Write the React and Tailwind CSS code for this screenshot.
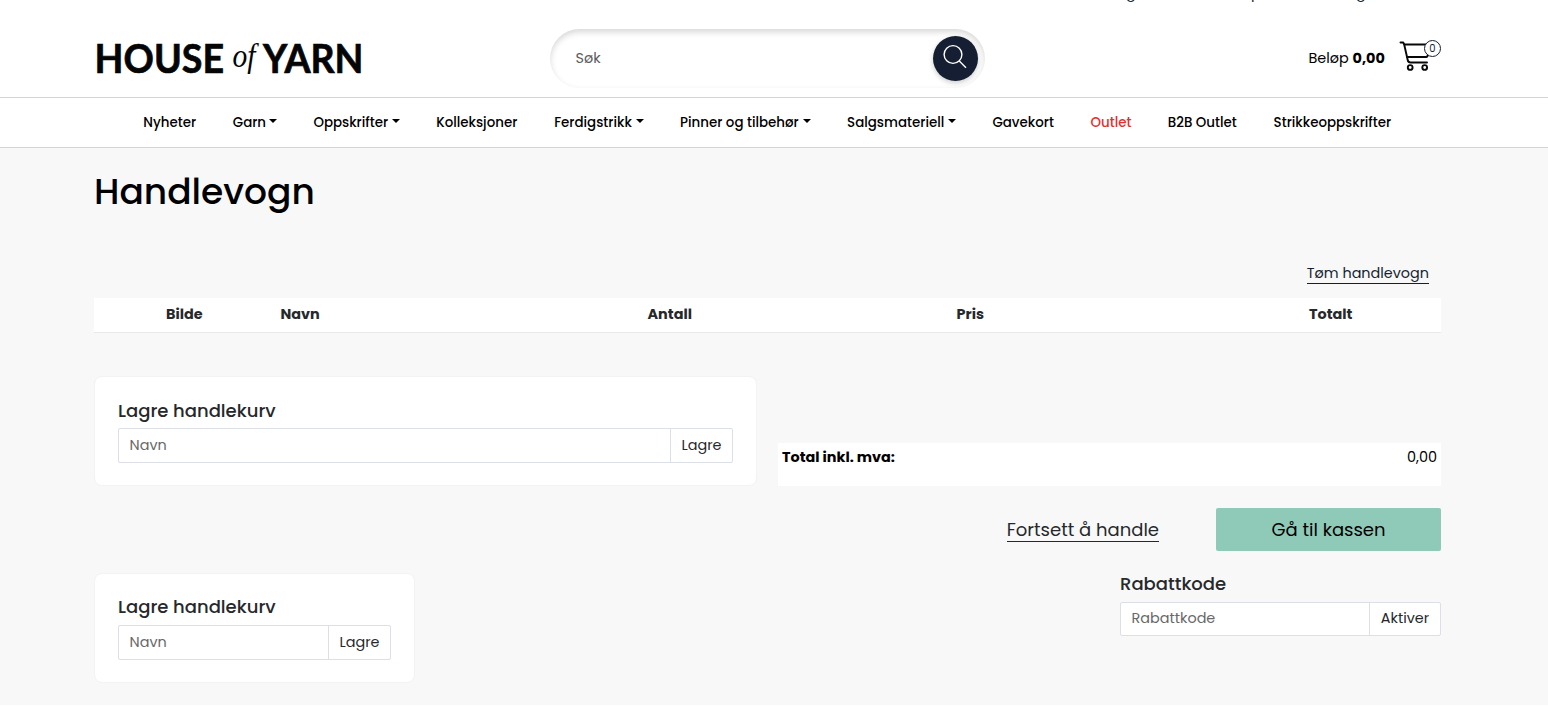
import React from "react";

const navItems = [
  { label: "Nyheter", box: "w-[53.5px]" },
  { label: "Garn", box: "w-[44.6px]", menu: true },
  { label: "Oppskrifter", box: "w-[86.8px]", menu: true },
  { label: "Kolleksjoner", box: "w-[82px]" },
  { label: "Ferdigstrikk", box: "w-[89.9px]", menu: true },
  { label: "Pinner og tilbehør", box: "w-[131px]", menu: true },
  { label: "Salgsmateriell", box: "w-[109.3px]", menu: true },
  { label: "Gavekort", box: "w-[62.1px]" },
  { label: "Outlet", box: "w-[41.3px]", color: "text-[#e62e2d]" },
  { label: "B2B Outlet", box: "w-[69.8px]" },
  { label: "Strikkeoppskrifter", box: "w-[119px]" },
];

function Logo() {
  return (
    <svg className="mt-[38px] h-10 w-[270px] shrink-0" viewBox="0 0 270 40" fill="#050505">
      <text x="0.6" y="35" fontFamily="Lato" fontWeight="700" fontSize="40.5" textLength="129.5" lengthAdjust="spacingAndGlyphs" stroke="#050505" strokeWidth="0.7">HOUSE</text>
      <text x="138.5" y="28.5" fontFamily="Liberation Serif" fontStyle="italic" fontSize="33" textLength="23" lengthAdjust="spacingAndGlyphs">of</text>
      <text x="169" y="35" fontFamily="Lato" fontWeight="700" fontSize="40.5" textLength="100.5" lengthAdjust="spacingAndGlyphs" stroke="#050505" strokeWidth="0.7">YARN</text>
    </svg>
  );
}

function Search() {
  return (
    <div className="mt-[29px] flex h-[59px] w-[435px] items-center justify-between rounded-full bg-white pr-[7px] pl-[25.5px] shadow-[inset_0_3px_6px_rgba(0,0,0,0.16)]">
      <span className="pb-px text-[14.4px] leading-5 text-[#5c5c5c]">Søk</span>
      <button className="size-[45px] rounded-full bg-[#151e32] shadow-[0_2px_5px_rgba(0,0,0,0.2)]">
        <svg viewBox="0 0 45 45" className="size-[45px]" fill="none" stroke="white" strokeWidth="1.4">
          <circle cx="20" cy="18.5" r="8.9" />
          <path d="M26.3 25L33 31.7" />
        </svg>
      </button>
    </div>
  );
}

function Cart() {
  return (
    <div className="relative mt-[40px] h-8 w-[42px]">
      <svg viewBox="0 0 42 32" className="h-8 w-[42px]" fill="none" stroke="#080808" strokeWidth="1.9" strokeLinecap="round" strokeLinejoin="round">
        <path d="M1.5 2.5H4.2L5.2 4.5L8.7 20Q9.2 22.5 11.5 22.5H28" />
        <path d="M5.5 4.5H28M8.2 17H27.2Q28.5 17 29 14.5" />
        <circle cx="11.2" cy="27.5" r="2.4" />
        <circle cx="25.7" cy="27.5" r="2.4" />
      </svg>
      <span className="absolute top-0 right-0 flex size-[17px] items-center justify-center rounded-full border border-[#151e32] bg-white pt-px text-[10px] leading-none text-[#151e32]">0</span>
    </div>
  );
}

function InputGroup({ placeholder, action, actionWidth, height = "h-[35px]" }) {
  return (
    <div className={`flex rounded-[2px] border border-[#dcdfe6] bg-white text-[14.4px] ${height}`}>
      <span className="flex flex-1 items-center pl-[10.6px] text-[#686868]">{placeholder}</span>
      <button className={`border-l border-[#dcdfe6] text-center text-[#26282b] ${actionWidth}`}>{action}</button>
    </div>
  );
}

function SaveCard({ size, pad }) {
  return (
    <section className={`rounded-lg border border-[#f3f3f3] bg-white px-[23px] ${size} ${pad}`}>
      <h2 className="text-[18px] leading-6 font-medium text-[#26282b]">Lagre handlekurv</h2>
      <InputGroup placeholder="Navn" action="Lagre" actionWidth="w-[62px]" />
    </section>
  );
}

export default function App() {
  return (
    <div className="h-[716px] overflow-hidden bg-white font-[Poppins,Inter,sans-serif] text-black">
      <header className="h-[98px] border-b border-[#d4d4d4]">
        <div className="relative flex h-full pl-[94px]">
          <div className="absolute top-0 left-[1126px] flex h-[2px] items-end overflow-hidden text-[14.4px] leading-[17px] text-[#151e32]">
            <span className="w-[125px]">g</span>
            <span className="w-[105px]">p</span>
            <span>g</span>
          </div>
          <Logo />
          <div className="w-[186px]" />
          <Search />
          <div className="mt-[47px] ml-[323.5px] w-[90.5px] text-[14.4px] leading-[22px] whitespace-nowrap">
            Beløp <b>0,00</b>
          </div>
          <Cart />
        </div>
      </header>
      <nav className="flex h-[50px] items-center gap-9 border-b border-[#d4d4d4] pt-px pl-[143.3px] text-[13.4px] leading-5 font-medium">
        {navItems.map((item) => (
          <a key={item.label} className={`flex shrink-0 items-center justify-between whitespace-nowrap ${item.box} ${item.color || ""}`}>
            {item.label}
            {item.menu && <i className="-mt-[5px] border-x-4 border-t-4 border-x-transparent border-t-black" />}
          </a>
        ))}
      </nav>
      <main className="h-[557px] bg-[#f8f8f8] pr-[107px] pl-[94px]">
        <h1 className="pt-5 text-[36px] leading-[48px] font-medium">Handlevogn</h1>
        <div className="mt-[46px] flex justify-end pr-3">
          <a className="h-[22px] border-b border-[#151e32] text-[14.4px] leading-[23px] text-[#151e32]">Tøm handlevogn</a>
        </div>
        <div className="mt-[14px] flex h-[35px] items-center border-b border-[#e9e9e9] bg-white pb-[2px] pl-[72px] text-[14.4px] leading-5 font-bold text-[#26282b]">
          <span className="w-[114.5px]">Bilde</span>
          <span className="w-[367px]">Navn</span>
          <span className="w-[309px]">Antall</span>
          <span className="w-[352.5px]">Pris</span>
          <span>Totalt</span>
        </div>
        <div className="mt-[43px] flex justify-between">
          <SaveCard size="h-[110px] w-[663px]" pad="pt-[22px] [&>h2]:mb-[5px]" />
          <div className="mt-[67px] flex h-[43px] w-[663px] justify-between bg-white px-1 pt-1 text-[14.4px] leading-5">
            <b>Total inkl. mva:</b>
            <span>0,00</span>
          </div>
        </div>
        <div className="mt-[22px] flex h-[43px] items-center justify-end gap-[57px] text-lg">
          <a className="h-[25px] border-b border-[#26282b] leading-[26px] text-[#26282b]">Fortsett å handle</a>
          <button className="h-[43px] w-[225px] rounded-[2px] bg-[#8fc9b7]">Gå til kassen</button>
        </div>
        <div className="mt-[22px] flex justify-between">
          <SaveCard size="h-[110px] w-[321px]" pad="pt-[21px] [&>h2]:mb-[6px]" />
          <section className="-mt-px w-[321px]">
            <h2 className="mb-[6px] text-[18px] leading-6 font-medium text-[#26282b]">Rabattkode</h2>
            <InputGroup placeholder="Rabattkode" action="Aktiver" actionWidth="w-[71px]" height="h-[34px]" />
          </section>
        </div>
      </main>
    </div>
  );
}
